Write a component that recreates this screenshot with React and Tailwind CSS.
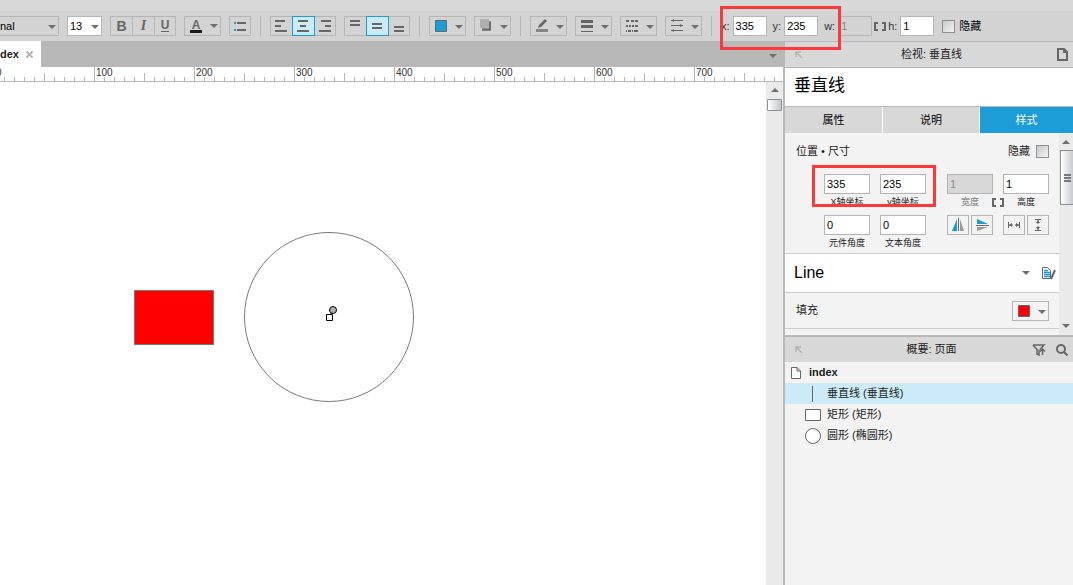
import React, { useState } from 'react';

const GREY = '#666666';
const BLUE = '#1c9dd8';

const ALIGN_ICONS = [
  { label: 'Align left', d: 'M5 5h10M5 10h6M5 15h12' },
  { label: 'Align center', d: 'M6 5h10M8 10h6M5 15h12' },
  { label: 'Align right', d: 'M7 5h10M11 10h6M5 15h12' },
];

const VALIGN_ICONS = [
  { label: 'Align top', d: 'M6 5h10M6 9h10' },
  { label: 'Align middle', d: 'M6 8h10M6 12h10' },
  { label: 'Align bottom', d: 'M6 11h10M6 15h10' },
];

const RULER_MARKS = ['0', '100', '200', '300', '400', '500', '600', '700'];

const TABS = ['属性', '说明', '样式'];

function Caret({ className }) {
  return (
    <svg className={className} width="8" height="4" viewBox="0 0 8 4" fill="#6f6f6f" aria-hidden="true">
      <path d="M0 0h8L4 4z" />
    </svg>
  );
}

function Separator() {
  return <div className="mx-px h-5 w-px shrink-0 bg-[#b5b5b5]" />;
}

function ToggleGroup({ icons, initial }) {
  const [active, setActive] = useState(initial);
  return (
    <div className="flex shrink-0">
      {icons.map((icon, i) => (
        <button
          key={icon.label}
          aria-label={icon.label}
          onClick={() => setActive(i)}
          className={`h-5 w-[23px] border not-first:-ml-px last:w-[22px] ${
            i === active ? 'relative border-[#1c9dd8] bg-[#cbebf8]' : 'border-[#b5b5b5]'
          }`}
        >
          <svg className="h-[18px] w-[20px]" viewBox="1 1 20 18" stroke={GREY} strokeWidth="2">
            <path d={icon.d} />
          </svg>
        </button>
      ))}
    </div>
  );
}

// Icon button with a drop-down arrow
function MenuButton({ label, children }) {
  return (
    <button aria-label={label} className="h-5 w-[37px] shrink-0 border border-[#b5b5b5]">
      <svg className="h-[18px] w-[35px]" viewBox="1 1 35 18" fill="none">
        {children}
        <path d="M26 9h8l-4 4z" fill="#6f6f6f" />
      </svg>
    </button>
  );
}

function LinkIcon({ className }) {
  return (
    <svg className={className} width="12" height="9" viewBox="0 0 12 9" fill="none" stroke={GREY} strokeWidth="2" aria-hidden="true">
      <path d="M4 1H1v7h3M8 1h3v7H8" />
    </svg>
  );
}

function CornerArrow() {
  return (
    <svg width="8" height="8" viewBox="0 0 8 8" fill="none" stroke="#b3b3b3" strokeWidth="1.5" aria-hidden="true">
      <path d="M1 6V1h5M1 1l6 6" />
    </svg>
  );
}

function PageIcon({ className }) {
  return (
    <svg className={className} width="10" height="12" viewBox="0 0 10 12" fill="#fff" stroke={GREY} aria-hidden="true">
      <path d="M.5.5h5.5l3.5 3.5v7.5h-9zM6 .5v3.5h3.5" />
    </svg>
  );
}

function CoordInput({ label, value, disabled }) {
  return (
    <label className="flex items-center gap-[3px]">
      <span>{label}:</span>
      <input
        defaultValue={value}
        disabled={disabled}
        className="h-5 w-[34px] border border-[#b5b5b5] bg-white px-0.5 text-black disabled:bg-[#d3d3d3] disabled:text-[#888888]"
      />
    </label>
  );
}

function Toolbar() {
  return (
    <header className="shrink-0 bg-[#d8d8d8] pt-[11px]">
      <div className="flex h-[30px] items-center gap-2 bg-[#d3d3d3]">
        <div className="relative shrink-0">
          <select aria-label="Font style" className="block h-5 w-[59px] appearance-none border border-l-0 border-[#b5b5b5] text-[11px]">
            <option>nal</option>
          </select>
          <Caret className="pointer-events-none absolute top-[9px] right-[3px]" />
        </div>
        <div className="relative shrink-0">
          <select aria-label="Font size" className="block h-5 w-[35px] appearance-none border border-[#b5b5b5] bg-white pl-0.5 text-[11px]">
            <option>13</option>
          </select>
          <Caret className="pointer-events-none absolute top-[9px] right-[3px]" />
        </div>

        <div className="flex shrink-0 text-[#666666]">
          <button className="h-5 w-[23px] border border-[#b5b5b5] text-[14px] leading-[18px] font-bold">B</button>
          <button className="-ml-px h-5 w-[23px] border border-[#b5b5b5] font-['Liberation_Serif',serif] text-[14px] leading-[18px] font-bold italic">I</button>
          <button className="-ml-px flex h-5 w-[22px] flex-col items-center border border-[#b5b5b5] pt-[3px]">
            <span className="text-[12px] leading-[10px] font-bold">U</span>
            <span className="mt-px h-px w-2 bg-[#666666]" />
          </button>
        </div>

        <button aria-label="Text color" className="flex h-5 w-[37px] shrink-0 items-center justify-between border border-[#b5b5b5] pr-0.5 pl-[5px]">
          <span className="flex flex-col items-center">
            <span className="text-[12px] leading-[10px] font-bold text-[#666666]">A</span>
            <span className="h-[3px] w-3 bg-[#1c1c1c]" />
          </span>
          <Caret />
        </button>

        <button aria-label="Bulleted list" className="h-5 w-[22px] shrink-0 border border-[#b5b5b5]">
          <svg className="h-[18px] w-[20px]" viewBox="1 1 20 18" strokeWidth="2">
            <path d="M5 7h2M5 14h2" stroke={BLUE} />
            <path d="M8 7h9M8 14h9" stroke={GREY} />
          </svg>
        </button>

        <Separator />
        <ToggleGroup icons={ALIGN_ICONS} initial={1} />
        <ToggleGroup icons={VALIGN_ICONS} initial={1} />
        <Separator />

        <MenuButton label="Fill color">
          <path d="M6.5 4.5h11v11h-11z" fill={BLUE} stroke={GREY} />
        </MenuButton>
        <MenuButton label="Shadow">
          <path d="M8 5h9v9H8z" fill="#8d8d8d" />
          <path d="M16 6v8H8" stroke="#666" strokeWidth="1.5" />
          <path d="M6 3h9v9H6z" fill="#b0b0b0" />
        </MenuButton>
        <Separator />

        <MenuButton label="Line color">
          <path d="M6 13h12v3H6z" fill="#858585" />
          <path d="M8 12l1-3 6-6 2 2-6 6z" fill={GREY} />
        </MenuButton>
        <MenuButton label="Line width">
          <path d="M6 4h12v3H6zM6 9h12v3H6zM6 15h12v1H6z" fill={GREY} />
        </MenuButton>
        <MenuButton label="Line style">
          <path d="M6 5h3M11 5h3M15 5h3M6 10h2M9 10h2M12 10h2M15 10h3M6 15h1M8 15h3M12 15h1M14 15h4" stroke={GREY} strokeWidth="2" />
        </MenuButton>
        <MenuButton label="Arrow style">
          <path d="M6 4.5h12M6 9.5h12M6 14.5h12" stroke={GREY} />
          <path d="M9 3v3L6.5 4.5zM15 8v3l3-1.5zM9 13v3l-2.5-1.5z" fill={GREY} />
        </MenuButton>
        <Separator />

        <div className="relative flex shrink-0 items-center gap-1.5 text-[11px] text-[#333333]">
          <CoordInput label="x" value="335" />
          <CoordInput label="y" value="235" />
          <div className="flex items-center gap-0.5">
            <CoordInput label="w" value="1" disabled />
            <LinkIcon />
            <CoordInput label="h" value="1" />
          </div>
          <div className="pointer-events-none absolute -top-[10px] -left-px z-10 h-[44px] w-[121px] border-3 border-[#fc3838]" />
        </div>
        <label className="flex shrink-0 items-center gap-1 text-[11px]">
          <input type="checkbox" className="size-[13px] appearance-none border border-[#8f8f8f] bg-linear-to-br from-[#c8c8c8] to-[#f4f4f4]" />
          隐藏
        </label>
      </div>
    </header>
  );
}

function Ruler() {
  return (
    <div className="h-[15px] shrink-0 overflow-hidden border-b border-[#b5b5b5] bg-white">
      <div className="-ml-1.5 flex">
        {RULER_MARKS.map((mark) => (
          <div key={mark} className="relative h-[14px] w-[100px] shrink-0 border-l border-[#b5b5b5] pl-px text-[10px] leading-[12px] text-[#333333]">
            {mark}
            <svg className="absolute top-0 -left-px h-[14px] w-[100px]" viewBox="0 0 100 14" stroke="#b5b5b5">
              <path d="M10.5 10v4M20.5 10v4M30.5 10v4M40.5 10v4M50.5 6v8M60.5 10v4M70.5 10v4M80.5 10v4M90.5 10v4" />
            </svg>
          </div>
        ))}
      </div>
    </div>
  );
}

function Canvas() {
  return (
    <main className="flex min-w-0 flex-1 flex-col">
      <div className="flex h-[26px] shrink-0 items-stretch justify-between bg-[#b8b8b8]">
        <div className="flex w-[41px] items-center justify-between bg-white pr-2 text-[11px] font-bold text-[#222222]">
          dex
          <button aria-label="Close tab">
            <svg width="7" height="7" viewBox="0 0 7 7" stroke="#b3b3b3" strokeWidth="2">
              <path d="M.5.5l6 6M6.5.5l-6 6" />
            </svg>
          </button>
        </div>
        <button aria-label="All tabs" className="pt-1 pr-1.5">
          <Caret />
        </button>
      </div>
      <Ruler />
      <div className="flex flex-1 bg-white">
        <div className="relative flex-1 overflow-hidden">
          <div className="absolute top-[208px] left-[134px] h-[55px] w-[80px] border border-[#797979] bg-[#ff0000]" />
          <div className="absolute top-[150px] left-[244px] size-[170px] rounded-full border border-[#797979]" />
          <svg className="absolute top-[223px] left-[325px]" width="14" height="17" viewBox="0 0 14 17" stroke="#000">
            <circle cx="8" cy="5" r="3.5" fill="#b0b0b0" />
            <path d="M6 8v2" />
            <path d="M1.5 9.5h6v6h-6z" fill="#fff" />
          </svg>
        </div>
        <div className="flex w-[17px] shrink-0 flex-col items-center gap-[7px] bg-[#eaeaea] pt-1.5">
          <Caret className="rotate-180" />
          <div className="h-3 w-[15px] rounded-[1px] border border-[#8f8f8f] bg-linear-to-r from-white to-[#c4c6c9]" />
        </div>
      </div>
    </main>
  );
}

function Field({ id, label, value, disabled }) {
  return (
    <div className="flex flex-col">
      <input
        id={id}
        defaultValue={value}
        disabled={disabled}
        className="h-5 w-full border border-[#b5b5b5] bg-white px-0.5 text-[11px] disabled:bg-[#d8d8d8] disabled:text-[#888888]"
      />
      <label htmlFor={id} className={`text-center text-[9px] leading-[17px] whitespace-nowrap ${disabled ? 'text-[#777777]' : 'text-[#222222]'}`}>
        {label}
      </label>
    </div>
  );
}

function IconButton({ label, children }) {
  return (
    <button aria-label={label} className="h-5 w-[22px] border border-[#b5b5b5]">
      <svg className="h-[18px] w-[20px]" viewBox="1 1 20 18" fill="none">
        {children}
      </svg>
    </button>
  );
}

function PanelHeader({ title, children }) {
  return (
    <div className="grid h-[25px] grid-cols-[1fr_auto_1fr] items-center bg-[#d8d8d8] pr-[5px] pl-2.5 text-[11px] text-[#222222]">
      <CornerArrow />
      <h2>{title}</h2>
      <div className="flex items-center justify-end gap-2.5">{children}</div>
    </div>
  );
}

function Inspector() {
  const [tab, setTab] = useState('样式');

  return (
    <section>
      <div className="border-t border-[#b8b8b8]">
        <PanelHeader title="检视: 垂直线">
          <svg width="11" height="13" viewBox="0 0 11 13" fill="none" stroke={GREY} strokeWidth="2">
            <path d="M1 1h6l3 3v8H1zM7 1v3h3" />
          </svg>
        </PanelHeader>
      </div>
      <h1 className="h-[39px] border-t border-[#b8b8b8] bg-white pl-[9px] text-[17px] leading-[36px]">垂直线</h1>
      <div className="grid h-[27px] grid-cols-[97px_97px_1fr] border-t border-[#b8b8b8]">
        {TABS.map((name) => (
          <button
            key={name}
            onClick={() => setTab(name)}
            className={`not-first:border-l not-first:border-white text-[11px] ${name === tab ? 'bg-[#1c9dd8] text-white' : 'bg-[#d8d8d8]'}`}
          >
            {name}
          </button>
        ))}
      </div>

      <div className="flex">
        <div className="min-w-0 flex-1">
          <div className="h-[121px] border-b border-[#cccccc] pr-2.5 pl-[11px]">
            <div className="flex h-[41px] items-center justify-between pb-1 text-[11px] text-[#222222]">
              <h3>位置 • 尺寸</h3>
              <label className="flex items-center gap-1.5">
                隐藏
                <input type="checkbox" className="size-[13px] appearance-none border border-[#8f8f8f] bg-linear-to-br from-[#c8c8c8] to-[#f4f4f4]" />
              </label>
            </div>
            <div className="flex items-start justify-between pl-7">
              <div className="relative grid grid-cols-[46px_46px] gap-x-2.5 gap-y-1">
                <Field id="pos-x" label="X轴坐标" value="335" />
                <Field id="pos-y" label="y轴坐标" value="235" />
                <Field id="rotation" label="元件角度" value="0" />
                <Field id="text-rotation" label="文本角度" value="0" />
                <div className="pointer-events-none absolute -top-[9px] -left-3 h-[42px] w-[124px] border-3 border-[#fc3838]" />
              </div>
              <div className="relative grid grid-cols-[46px_46px] gap-x-2.5 gap-y-1">
                <Field id="width" label="宽度" value="1" disabled />
                <Field id="height" label="高度" value="1" />
                <LinkIcon className="absolute top-6 left-[45px]" />
                <div className="flex h-5 justify-between">
                  <IconButton label="Flip horizontal">
                    <path d="M10 4v12H5z" fill={BLUE} />
                    <path d="M13 4v12h4z" fill="#9a9a9a" />
                    <path d="M11.5 3v13" stroke={GREY} />
                  </IconButton>
                  <IconButton label="Flip vertical">
                    <path d="M6 4v5h11z" fill={BLUE} />
                    <path d="M6 16v-4h11z" fill="#9a9a9a" />
                    <path d="M5 10.5h13" stroke={GREY} />
                  </IconButton>
                </div>
                <div className="flex h-5 justify-between">
                  <IconButton label="Fit width">
                    <path d="M5.5 7v6M16.5 7v6M6 10h4M12 10h4" stroke={GREY} />
                    <path d="M6 10l3-2v4zM16 10l-3-2v4z" fill={GREY} />
                  </IconButton>
                  <IconButton label="Fit height">
                    <path d="M8 4.5h6M8 15.5h6M11 5v4M11 11v4" stroke={GREY} />
                    <path d="M11 5l2 3H9zM11 15l2-3H9z" fill={GREY} />
                  </IconButton>
                </div>
              </div>
            </div>
          </div>

          <div className="flex h-[39px] items-center border-b border-[#cccccc] bg-white pr-[3px] pl-[9px]">
            <span className="flex-1 text-[16px]">Line</span>
            <button aria-label="Choose style">
              <Caret />
            </button>
            <button aria-label="Edit style" className="ml-3">
              <svg width="14" height="13" viewBox="0 0 14 13" fill="none">
                <path d="M.5.5h5l3 3v8h-8z" fill="#fff" stroke={GREY} />
                <path d="M2 3.500h4M2 5.500h6M2 7.500h6M2 9.500h6" stroke={BLUE} strokeWidth="1.500" />
                <path d="M13 3l-4 9" stroke={GREY} strokeWidth="2" />
              </svg>
            </button>
          </div>

          <div className="flex h-9 items-center justify-between border-b border-[#cccccc] pr-2.5 pl-[11px] text-[11px] text-[#222222]">
            <span>填充</span>
            <MenuButton label="Fill">
              <path d="M6.5 4.5h11v11h-11z" fill="#ff0000" stroke={GREY} />
            </MenuButton>
          </div>
          <div className="h-1.5" />
        </div>

        <div className="flex w-[14px] shrink-0 flex-col items-center overflow-hidden bg-[#eaeaea] py-[7px]">
          <Caret className="shrink-0 rotate-180" />
          <div className="mt-1.5 ml-px flex h-[55px] w-[13px] flex-col items-center justify-center gap-px border border-r-0 border-[#8f8f8f] bg-linear-to-r from-white to-[#c9cbce]">
            <span className="h-0.5 w-[7px] bg-[#777777]" />
            <span className="h-0.5 w-[7px] bg-[#777777]" />
            <span className="h-0.5 w-[7px] bg-[#777777]" />
          </div>
          <Caret className="mt-auto shrink-0" />
        </div>
      </div>
    </section>
  );
}

function Outline() {
  return (
    <section className="border-t-2 border-[#b8b8b8]">
      <PanelHeader title="概要: 页面">
        <button aria-label="Filter">
          <svg width="14" height="12" viewBox="0 0 14 12" fill="none" stroke={GREY} strokeWidth="1.5">
            <path d="M1 1h11L8 5.5M1 1l4 4.5V10l2 1V5.5" />
            <path d="M10.5 11V5M8 7.500L10.500 5 13 7.500" />
          </svg>
        </button>
        <button aria-label="Search">
          <svg width="12" height="12" viewBox="0 0 12 12" fill="none" stroke={GREY} strokeWidth="2">
            <circle cx="5" cy="5" r="4" />
            <path d="M8 8l3.5 3.5" />
          </svg>
        </button>
      </PanelHeader>
      <ul className="text-[11px] text-[#222222]">
        <li className="flex h-[21px] items-center gap-2 pl-[6px] font-bold">
          <PageIcon />
          index
        </li>
        <li className="flex h-[21px] items-center gap-1.5 bg-[#cbebf8] pl-5">
          <svg width="16" height="16" viewBox="0 0 16 16" stroke={GREY}>
            <path d="M7.5 0v16" />
          </svg>
          垂直线 (垂直线)
        </li>
        <li className="flex h-[21px] items-center gap-1.5 pl-5">
          <svg width="16" height="12" viewBox="0 0 16 12" fill="#fff" stroke={GREY}>
            <path d="M.5.5h15v11H.5z" />
          </svg>
          矩形 (矩形)
        </li>
        <li className="flex h-[21px] items-center gap-1.5 pl-5">
          <svg width="16" height="16" viewBox="0 0 16 16" fill="#fff" stroke={GREY}>
            <circle cx="8" cy="8" r="7.5" />
          </svg>
          圆形 (椭圆形)
        </li>
      </ul>
    </section>
  );
}

export default function App() {
  return (
    <div className="flex min-h-screen flex-col overflow-hidden bg-[#f3f3f3] font-['Liberation_Sans','Noto_Sans_CJK_SC',sans-serif] text-black">
      <Toolbar />
      <div className="flex flex-1">
        <Canvas />
        <aside className="w-[290px] shrink-0 border-l-2 border-[#b8b8b8] bg-[#f3f3f3]">
          <Inspector />
          <Outline />
        </aside>
      </div>
    </div>
  );
}
